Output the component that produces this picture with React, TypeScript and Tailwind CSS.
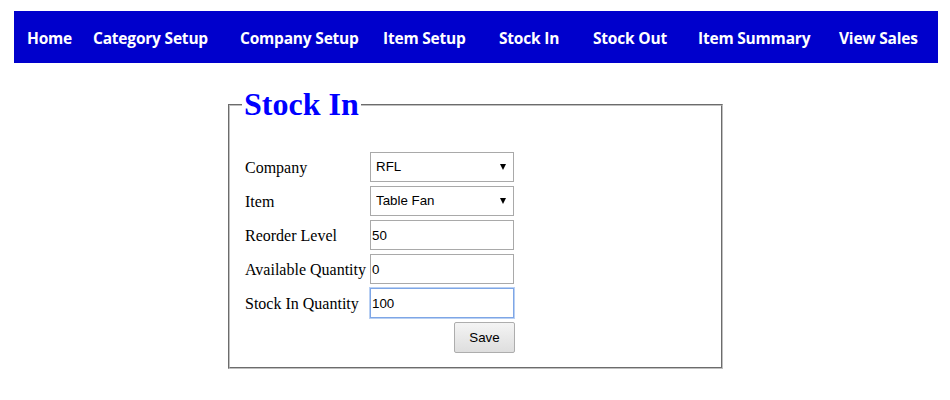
import { useState } from "react";

const links = [
  { label: "Home", w: "w-[66px]" },
  { label: "Category Setup", w: "w-[147px]" },
  { label: "Company Setup", w: "w-[143px]" },
  { label: "Item Setup", w: "w-[116px]" },
  { label: "Stock In", w: "w-[94px]" },
  { label: "Stock Out", w: "w-[105px]" },
  { label: "Item Summary", w: "w-[141px]" },
  { label: "View Sales", w: "w-[90px]" },
];

function FakeSelect({ value }: { value: string }) {
  return (
    <div className="relative w-[144px] h-[30px] border border-[#a9a9a9] bg-white">
      <select
        defaultValue={value}
        className="w-full h-full appearance-none bg-transparent pl-[5px] pr-5 text-[13.33px] text-black outline-none font-['Liberation_Sans',Arial,sans-serif]"
      >
        <option>{value}</option>
      </select>
      <span className="pointer-events-none absolute right-[7px] top-[11px] w-0 h-0 border-l-[3px] border-r-[3px] border-t-[6px] border-l-transparent border-r-transparent border-t-black" />
    </div>
  );
}

function TextBox({ value, focused }: { value: string; focused?: boolean }) {
  const [v, setV] = useState(value);
  return (
    <input
      value={v}
      onChange={(e) => setV(e.target.value)}
      className={
        focused
          ? "w-[144px] h-[30px] px-[1px] border border-[#7ea6e6] outline outline-1 outline-[#b9d0f3] text-[13.33px] text-black font-['Liberation_Sans',Arial,sans-serif]"
          : "w-[144px] h-[30px] px-[1px] border border-[#a9a9a9] text-[13.33px] text-black font-['Liberation_Sans',Arial,sans-serif]"
      }
    />
  );
}

export default function App() {
  const rows = [
    { label: "Company", field: <FakeSelect value="RFL" /> },
    { label: "Item", field: <FakeSelect value="Table Fan" /> },
    { label: "Reorder Level", field: <TextBox value="50" /> },
    { label: "Available Quantity", field: <TextBox value="0" /> },
    { label: "Stock In Quantity", field: <TextBox value="100" focused /> },
  ];

  return (
    <div className="w-[950px] h-[400px] bg-white pt-[11px] overflow-hidden">
      {/* top menu */}
      <nav className="ml-[14px] w-[924px] h-[52px] bg-[#0000cc] flex items-center pl-[13px] pt-[3px]">
        {links.map((l) => (
          <a
            key={l.label}
            href="#"
            className={`${l.w} shrink-0 text-white font-bold text-[15.5px] tracking-[-0.2px] font-['Comic_Sans_MS','Open_Sans',sans-serif]`}
          >
            {l.label}
          </a>
        ))}
      </nav>

      {/* stock in form */}
      <fieldset className="ml-[228px] mt-[23px] w-[495px] h-[283px] border-2 [border-style:groove] border-[#c0c0c0] px-[12px] pb-[10px] font-['Liberation_Serif','Times_New_Roman',serif]">
        <legend className="px-[2px] text-[32px] leading-[37px] font-bold text-[#0000ff]">Stock In</legend>
        <div className="pt-[29px] pl-[3px] flex flex-col gap-[4px]">
          {rows.map((r) => (
            <div key={r.label} className="flex items-center">
              <span className="w-[125px] text-[16px] text-black pt-[1px]">{r.label}</span>
              {r.field}
            </div>
          ))}
          <div className="flex pl-[209px]">
            <button className="w-[61px] h-[31px] rounded-[2px] border border-[#adadad] bg-gradient-to-b from-[#f4f4f4] to-[#dedede] text-[13.33px] text-black font-['Liberation_Sans',Arial,sans-serif]">
              Save
            </button>
          </div>
        </div>
      </fieldset>
    </div>
  );
}
